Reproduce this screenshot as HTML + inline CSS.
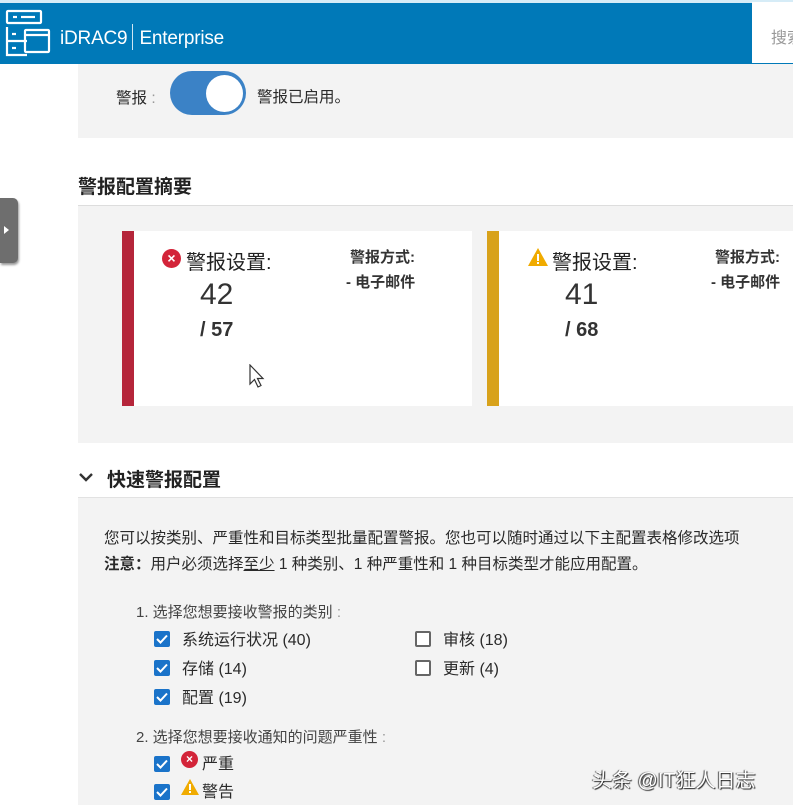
<!DOCTYPE html>
<html><head><meta charset="utf-8">
<style>
*{margin:0;padding:0;box-sizing:border-box}
body{width:793px;height:805px;overflow:hidden;background:#fff;font-family:"Liberation Sans","Noto Sans CJK SC",sans-serif;color:#333;position:relative}
.a{position:absolute}
.hdr{left:0;top:0;width:793px;height:64px;background:#0079b8;border-top:3px solid #d6ecf7}
.search{left:752px;top:2px;width:41px;height:61px;background:#fff;color:#999;font-size:16px;padding:22px 0 0 19px;overflow:hidden;white-space:nowrap}
.gray{background:#f3f3f3}
.cb{width:16px;height:16px;background:#1a73c9;border-radius:2px;display:flex;align-items:center;justify-content:center}
.cbo{width:16px;height:16px;border:2px solid #666;border-radius:2px;background:#fff}
.t{font-size:15.5px;color:#2a2a2a;white-space:nowrap}
</style></head><body>
<div class="a hdr"></div>
<svg class="a" style="left:3px;top:9px" width="48" height="48" viewBox="0 0 48 48" fill="none" stroke="#fff" stroke-width="2.2">
<rect x="4" y="2" width="34" height="12" rx="1"/><line x1="10" y1="8" x2="14" y2="8"/><line x1="18" y1="8" x2="32" y2="8"/>
<path d="M4 18v28h20"/><path d="M4 32h20"/><line x1="9" y1="25" x2="13" y2="25"/><line x1="9" y1="39" x2="13" y2="39"/>
<rect x="22" y="21" width="24" height="22" rx="1"/><line x1="22" y1="26" x2="46" y2="26"/>
</svg>
<div class="a" style="left:60px;top:24px;font-size:19px;color:#fff;white-space:nowrap;letter-spacing:-0.2px">iDRAC9<span style="display:inline-block;width:1px;height:26px;background:#cfe6f3;vertical-align:-6px;margin:0 6px 0 5px"></span>Enterprise</div>
<div class="a search">搜索</div>

<div class="a gray" style="left:78px;top:64px;width:715px;height:74px"></div>
<div class="a t" style="left:116px;top:86px">警报 <span style="color:#999">:</span></div>
<div class="a" style="left:170px;top:71px;width:76px;height:44px;border-radius:22px;background:#3b82c6"></div>
<div class="a" style="left:206px;top:75px;width:37px;height:37px;border-radius:50%;background:#fff"></div>
<div class="a t" style="left:257px;top:85px">警报已启用。</div>

<div class="a" style="left:78px;top:172px;font-size:19px;color:#222;font-weight:bold">警报配置摘要</div>
<div class="a gray" style="left:78px;top:205px;width:715px;height:238px;border-top:1px solid #ddd"></div>
<div class="a" style="left:122px;top:231px;width:12px;height:175px;background:#b5253a"></div>
<div class="a" style="left:134px;top:231px;width:338px;height:175px;background:#fff"></div>
<div class="a" style="left:487px;top:231px;width:12px;height:175px;background:#d8a21b"></div>
<div class="a" style="left:499px;top:231px;width:294px;height:175px;background:#fff"></div>

<div class="a" style="left:162px;top:249px;width:19px;height:19px;border-radius:50%;background:#d32439;color:#fff;font-size:14px;line-height:19px;text-align:center;font-weight:bold">×</div>
<div class="a" style="left:186px;top:246px;font-size:20px;color:#222">警报设置:</div>
<div class="a" style="left:200px;top:278px;font-size:30px;color:#333">42</div>
<div class="a" style="left:200px;top:319px;font-size:20px;color:#333;font-weight:bold">/ 57</div>
<div class="a" style="left:350px;top:246px;font-size:15px;font-weight:bold;color:#333">警报方式:</div>
<div class="a" style="left:346px;top:271px;font-size:15px;font-weight:bold;color:#333">- 电子邮件</div>
<svg class="a" style="left:249px;top:364px" width="16" height="25" viewBox="0 0 16 25"><path d="M1 1v19l4.5-4.5 3.5 7.5 3-1.5-3.5-7H14z" fill="#fff" stroke="#333" stroke-width="1.2"/></svg>

<svg class="a" style="left:527px;top:247px" width="22" height="20" viewBox="0 0 22 20"><path d="M11 1L21 19H1z" fill="#f0ab00"/><rect x="10" y="7" width="2" height="7" fill="#fff"/><rect x="10" y="15" width="2" height="2" fill="#fff"/></svg>
<div class="a" style="left:552px;top:246px;font-size:20px;color:#222">警报设置:</div>
<div class="a" style="left:565px;top:278px;font-size:30px;color:#333">41</div>
<div class="a" style="left:565px;top:319px;font-size:20px;color:#333;font-weight:bold">/ 68</div>
<div class="a" style="left:715px;top:246px;font-size:15px;font-weight:bold;color:#333">警报方式:</div>
<div class="a" style="left:711px;top:271px;font-size:15px;font-weight:bold;color:#333">- 电子邮件</div>

<svg class="a" style="left:78px;top:471px" width="16" height="12" viewBox="0 0 16 12"><path d="M2 3l6 6 6-6" fill="none" stroke="#333" stroke-width="2.4"/></svg>
<div class="a" style="left:107px;top:465px;font-size:19px;color:#222;font-weight:bold">快速警报配置</div>
<div class="a gray" style="left:78px;top:497px;width:715px;height:308px;border-top:1px solid #e2e2e2"></div>

<div class="a t" style="left:104px;top:526px">您可以按类别、严重性和目标类型批量配置警报。您也可以随时通过以下主配置表格修改选项</div>
<div class="a t" style="left:104px;top:552px"><b>注意：</b>用户必须选择<u>至少</u> 1 种类别、1 种严重性和 1 种目标类型才能应用配置。</div>

<div class="a t" style="left:136px;top:601px;font-size:15px;color:#444">1. 选择您想要接收警报的类别 <span style="color:#999">:</span></div>
<div class="a cb" style="left:154px;top:631px"><svg width="12" height="10"><path d="M1 5l3.5 3.5L11 1.5" fill="none" stroke="#fff" stroke-width="2"/></svg></div>
<div class="a t" style="left:182px;top:626px;font-size:16px">系统运行状况 (40)</div>
<div class="a cb" style="left:154px;top:660px"><svg width="12" height="10"><path d="M1 5l3.5 3.5L11 1.5" fill="none" stroke="#fff" stroke-width="2"/></svg></div>
<div class="a t" style="left:182px;top:655px;font-size:16px">存储 (14)</div>
<div class="a cb" style="left:154px;top:689px"><svg width="12" height="10"><path d="M1 5l3.5 3.5L11 1.5" fill="none" stroke="#fff" stroke-width="2"/></svg></div>
<div class="a t" style="left:182px;top:684px;font-size:16px">配置 (19)</div>
<div class="a cbo" style="left:415px;top:631px"></div>
<div class="a t" style="left:443px;top:626px;font-size:16px">审核 (18)</div>
<div class="a cbo" style="left:415px;top:660px"></div>
<div class="a t" style="left:443px;top:655px;font-size:16px">更新 (4)</div>

<div class="a t" style="left:136px;top:726px;font-size:15px;color:#444">2. 选择您想要接收通知的问题严重性 <span style="color:#999">:</span></div>
<div class="a cb" style="left:154px;top:756px"><svg width="12" height="10"><path d="M1 5l3.5 3.5L11 1.5" fill="none" stroke="#fff" stroke-width="2"/></svg></div>
<div class="a" style="left:181px;top:751px;width:17px;height:17px;border-radius:50%;background:#d32439;color:#fff;font-size:12px;line-height:17px;text-align:center;font-weight:bold">×</div>
<div class="a t" style="left:202px;top:750px;font-size:16px">严重</div>
<div class="a cb" style="left:154px;top:784px"><svg width="12" height="10"><path d="M1 5l3.5 3.5L11 1.5" fill="none" stroke="#fff" stroke-width="2"/></svg></div>
<svg class="a" style="left:180px;top:778px" width="20" height="18" viewBox="0 0 20 18"><path d="M10 1L19 17H1z" fill="#f0ab00"/><rect x="9" y="6" width="2" height="6" fill="#fff"/><rect x="9" y="13" width="2" height="2" fill="#fff"/></svg>
<div class="a t" style="left:202px;top:778px;font-size:16px">警告</div>

<div class="a" style="left:0;top:198px;width:18px;height:65px;background:#6e6e6e;border-radius:0 5px 5px 0;box-shadow:1px 2px 2px #999"></div>
<svg class="a" style="left:3px;top:225px" width="8" height="10"><path d="M1 1l5 4-5 4z" fill="#fff"/></svg>

<div class="a" style="left:592px;top:764px;font-size:20px;color:#fff;text-shadow:1px 1px 1px #222,-1px 0 1px #444;white-space:nowrap">头条 @IT狂人日志</div>
</body></html>
